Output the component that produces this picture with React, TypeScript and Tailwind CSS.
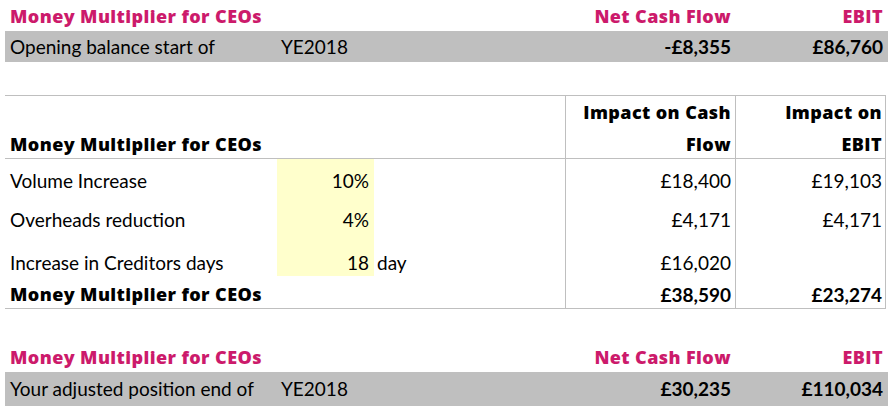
import React from "react";

const cols = "grid grid-cols-[272px_97px_191px_170px_151px]";
const pink = "text-[#cc1a6b]";
const boldLabel = "font-extrabold text-[18px] tracking-[0.4px] [font-family:'Open_Sans',sans-serif]";

function Summary({ title, label, cash, ebit, h2 }: { title: string; label: string; cash: string; ebit: string; h2: string }) {
  return (
    <div>
      <div className={`${cols} h-[31px] items-center ${pink}`}>
        <div className={`pl-[5px] whitespace-nowrap ${boldLabel}`}>{title}</div>
        <div />
        <div />
        <div className={`text-right pr-[4px] ${boldLabel}`}>Net Cash Flow</div>
        <div className={`text-right pr-[3px] ${boldLabel}`}>EBIT</div>
      </div>
      <div className={`${cols} ${h2} items-center bg-[#bfbfbf] w-[883px]`}>
        <div className="pl-[5px] whitespace-nowrap">{label}</div>
        <div className="pl-[4px]">YE2018</div>
        <div />
        <div className="text-right pr-[4px] font-bold">{cash}</div>
        <div className="text-right pr-[3px] font-bold">{ebit}</div>
      </div>
    </div>
  );
}

function Row({ label, val, unit, cash, ebit, h, pt }: { label: string; val: string; unit?: string; cash: string; ebit: string; h: string; pt: string }) {
  return (
    <div className={`${cols} ${h}`}>
      <div className={`pl-[5px] whitespace-nowrap ${pt}`}>{label}</div>
      <div className={`bg-[#ffffcc] text-right pr-[5px] ${pt}`}>{val}</div>
      <div className={`pl-[3px] ${pt}`}>{unit}</div>
      <div className={`border-l border-[#bfbfbf] text-right pr-[4px] ${pt}`}>{cash}</div>
      <div className={`border-l border-r border-[#bfbfbf] text-right pr-[3px] ${pt}`}>{ebit}</div>
    </div>
  );
}

export default function App() {
  return (
    <div className="w-[892px] h-[408px] bg-white overflow-hidden text-black text-[19px] leading-[24px] pl-[5px]" style={{ fontFamily: "Lato, 'Open Sans', sans-serif" }}>
      <Summary title="Money Multiplier for CEOs" label="Opening balance start of" cash="-£8,355" ebit="£86,760" h2="h-[31px]" />
      <div className="h-[33px]" />
      <div className="border-t border-[#bfbfbf] w-[881px]">
        <div className={`${cols} h-[63px] border-b border-[#bfbfbf] leading-[32px]`}>
          <div className={`pl-[5px] flex items-end whitespace-nowrap ${boldLabel}`}>Money Multiplier for CEOs</div>
          <div />
          <div />
          <div className={`border-l border-[#bfbfbf] text-right pr-[4px] whitespace-nowrap ${boldLabel}`}>Impact on Cash<br />Flow</div>
          <div className={`border-l border-r border-[#bfbfbf] text-right pr-[3px] whitespace-nowrap ${boldLabel}`}>Impact on<br />EBIT</div>
        </div>
        <Row label="Volume Increase" val="10%" cash="£18,400" ebit="£19,103" h="h-[41px]" pt="pt-[10px]" />
        <Row label="Overheads reduction" val="4%" cash="£4,171" ebit="£4,171" h="h-[39px]" pt="pt-[8px]" />
        <Row label="Increase in Creditors days" val="18" unit="day" cash="£16,020" ebit="" h="h-[37px]" pt="pt-[12px]" />
        <div className={`${cols} h-[33px] border-b border-[#bfbfbf]`}>
          <div className={`pl-[5px] pt-[6px] whitespace-nowrap ${boldLabel}`}>Money Multiplier for CEOs</div>
          <div />
          <div />
          <div className="border-l border-[#bfbfbf] text-right pr-[4px] pt-[7px] font-bold">£38,590</div>
          <div className="border-l border-r border-[#bfbfbf] text-right pr-[3px] pt-[7px] font-bold">£23,274</div>
        </div>
      </div>
      <div className="h-[32px]" />
      <Summary title="Money Multiplier for CEOs" label="Your adjusted position end of" cash="£30,235" ebit="£110,034" h2="h-[34px]" />
    </div>
  );
}
